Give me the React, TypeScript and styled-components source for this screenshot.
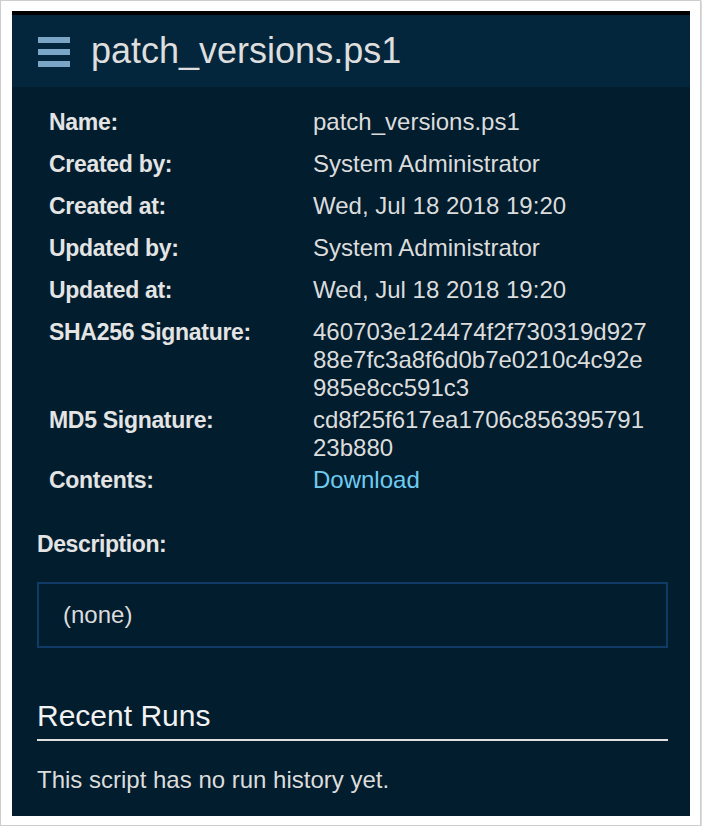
import React from "react";
import styled, { createGlobalStyle } from "styled-components";

const GlobalStyle = createGlobalStyle`
  html, body {
    margin: 0;
    padding: 0;
    background: #ffffff;
  }
  body {
    font-family: "Liberation Sans", Arial, Helvetica, sans-serif;
  }
`;

const Frame = styled.div`
  box-sizing: border-box;
  width: 701px;
  height: 826px;
  border: 1px solid #cdcdcd;
  box-shadow: 0 1px 2px rgba(0, 0, 0, 0.45);
  background: #ffffff;
  padding: 10px 10px 9px 11px;
  display: flex;
  flex-direction: column;
`;

const AppShell = styled.div`
  flex: 1;
  display: flex;
  flex-direction: column;
  background: #011d2e;
  border-top: 4px solid #000000;
`;

const Header = styled.header`
  height: 72px;
  background: #03263c;
  display: flex;
  align-items: center;
  padding-left: 26px;
  gap: 21px;
`;

const Burger = styled.div`
  width: 32px;
  display: flex;
  flex-direction: column;
  gap: 6px;
  margin-top: 2px;
`;

const BurgerBar = styled.span`
  display: block;
  height: 6px;
  background: #7aa7c7;
`;

const Title = styled.h1`
  margin: 0;
  font-size: 36px;
  font-weight: 400;
  color: #dedede;
  line-height: 40px;
`;

const Body = styled.main`
  padding: 19px 22px 0 25px;
  display: flex;
  flex-direction: column;
`;

const DetailList = styled.dl`
  margin: 0 0 0 12px;
  display: grid;
  grid-template-columns: 264px 338px;
`;

const Label = styled.dt`
  margin: 0;
  min-height: 42px;
  box-sizing: border-box;
  padding-top: 2px;
  font-size: 23px;
  letter-spacing: -0.3px;
  font-weight: 700;
  line-height: 28px;
  color: #e4e4e4;
`;

const Value = styled.dd`
  margin: 0;
  padding: 2px 0 2px;
  font-size: 24px;
  line-height: 28px;
  color: #dcdcdc;
  word-break: break-all;
`;

const Link = styled.a`
  color: #6fcbef;
  text-decoration: none;
`;

const SectionLabel = styled.div`
  margin-top: 24px;
  font-size: 23px;
  letter-spacing: -0.4px;
  font-weight: 700;
  line-height: 28px;
  color: #e4e4e4;
`;

const DescriptionBox = styled.div`
  margin-top: 24px;
  border: 2px solid #0f3b66;
  padding: 17px 24px;
  font-size: 24px;
  line-height: 28px;
  color: #dcdcdc;
`;

const SectionHeading = styled.h2`
  margin: 50px 0 0;
  padding-bottom: 5px;
  border-bottom: 2px solid #e0e0e0;
  font-size: 30px;
  font-weight: 400;
  line-height: 36px;
  color: #f2f2f2;
`;

const Note = styled.p`
  margin: 25px 0 0;
  font-size: 24px;
  line-height: 28px;
  color: #dcdcdc;
`;

type Detail = { label: string; value: React.ReactNode };

const details: Detail[] = [
  { label: "Name:", value: "patch_versions.ps1" },
  { label: "Created by:", value: "System Administrator" },
  { label: "Created at:", value: "Wed, Jul 18 2018 19:20" },
  { label: "Updated by:", value: "System Administrator" },
  { label: "Updated at:", value: "Wed, Jul 18 2018 19:20" },
  {
    label: "SHA256 Signature:",
    value: "460703e124474f2f730319d92788e7fc3a8f6d0b7e0210c4c92e985e8cc591c3",
  },
  { label: "MD5 Signature:", value: "cd8f25f617ea1706c85639579123b880" },
  { label: "Contents:", value: <Link href="#">Download</Link> },
];

export default function App() {
  return (
    <>
      <GlobalStyle />
      <Frame>
        <AppShell>
          <Header>
            <Burger aria-label="Menu">
              <BurgerBar />
              <BurgerBar />
              <BurgerBar />
            </Burger>
            <Title>patch_versions.ps1</Title>
          </Header>
          <Body>
            <DetailList>
              {details.map((d) => (
                <React.Fragment key={d.label}>
                  <Label>{d.label}</Label>
                  <Value>{d.value}</Value>
                </React.Fragment>
              ))}
            </DetailList>
            <SectionLabel>Description:</SectionLabel>
            <DescriptionBox>(none)</DescriptionBox>
            <SectionHeading>Recent Runs</SectionHeading>
            <Note>This script has no run history yet.</Note>
          </Body>
        </AppShell>
      </Frame>
    </>
  );
}
